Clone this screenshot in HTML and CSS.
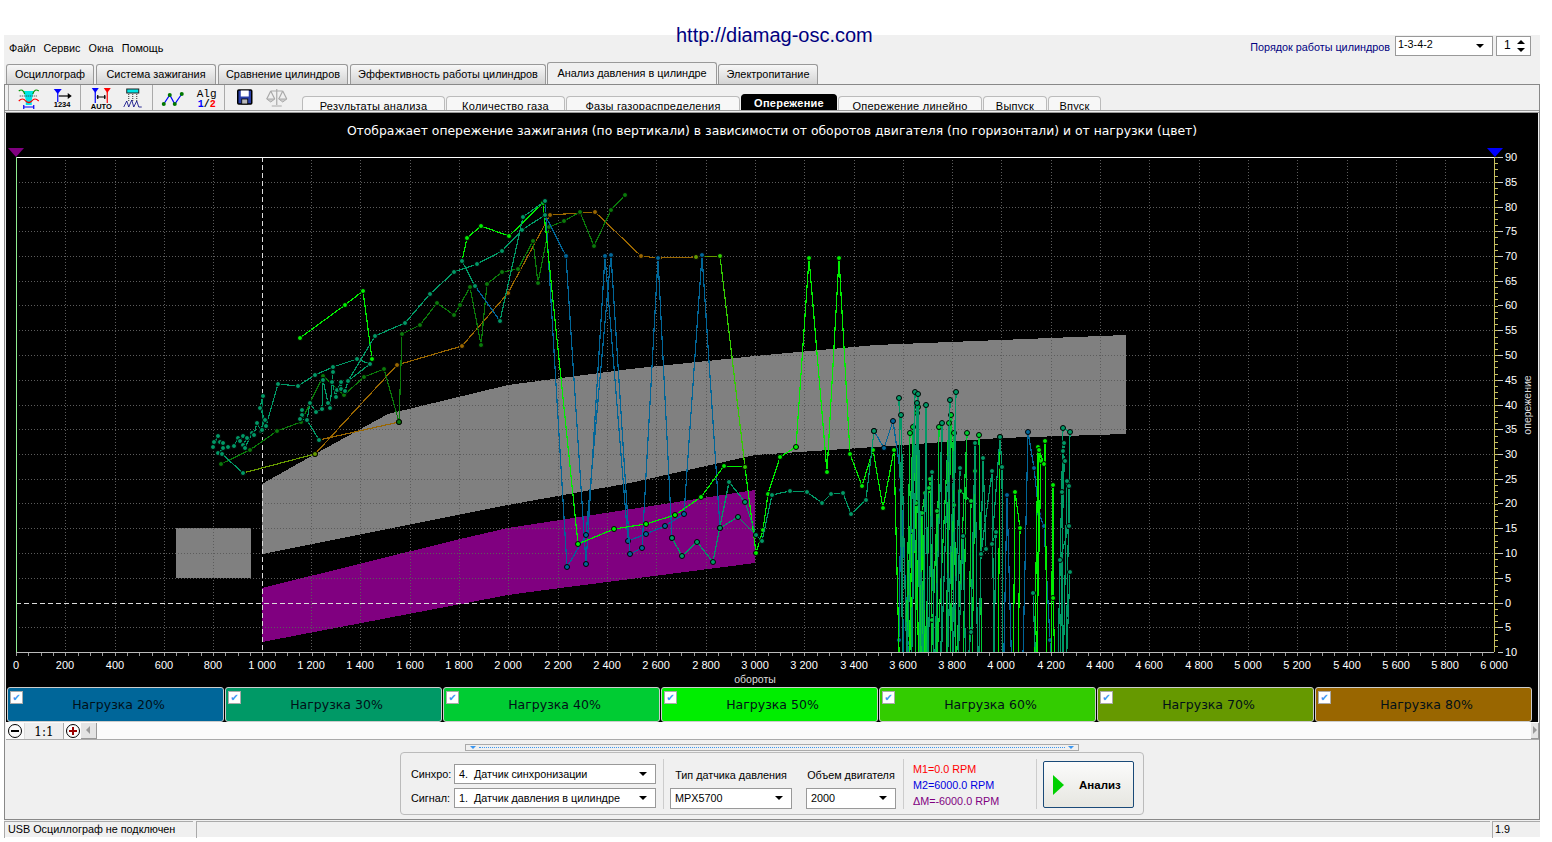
FILE: index.html
```html
<!DOCTYPE html>
<html>
<head>
    <meta charset="utf-8">
    <title>Diamag</title>
    <link rel="stylesheet" href="styles.css">
</head>
<body>
    <div class="site-link">http://diamag-osc.com</div>
    <div class="app">
        <div class="menubar">
            <div class="menu"><span>Файл</span><span>Сервис</span><span>Окна</span><span>Помощь</span></div>
            <div class="firing">
                <span class="firing-label">Порядок работы цилиндров</span>
                <div class="combo combo-firing"><span>1-3-4-2</span><i></i></div>
                <div class="spinner"><span>1</span><b class="up"></b><b class="down"></b></div>
            </div>
        </div>

        <div class="tabs">
            <div class="tab w1">Осциллограф</div>
            <div class="tab w2">Система зажигания</div>
            <div class="tab w3">Сравнение цилиндров</div>
            <div class="tab w4">Эффективность работы цилиндров</div>
            <div class="tab w5 active">Анализ давления в цилиндре</div>
            <div class="tab w6">Электропитание</div>
        </div>

        <div class="workspace">
            <div class="toolbar">
                <div class="tool-group">
                    <svg class="tool" viewBox="0 0 24 24">
                        <polygon class="i-cyan" points="7,5 17,5 15,14 15,19 9,19 9,14"/>
                        <path class="i-green i-thin" d="M2 5Q6 2 8 8M22 5Q18 2 16 8"/>
                        <path class="i-dots" d="M3 10H21"/>
                        <path class="i-red i-thin" d="M2 15Q6 11 9 15Q12 18 15 15Q18 11 22 15"/>
                        <path class="i-blue i-thin" d="M7 21H17M7 19V23M17 19V23"/>
                    </svg>
                    <svg class="tool" viewBox="0 0 24 24">
                        <polygon class="i-bluefill" points="5,3 13,3 9,8"/>
                        <path class="i-blue i-thin" d="M9 7V16"/>
                        <path class="i-black i-thin" d="M10 10H20"/>
                        <polygon class="i-blackfill" points="19,7 23,10 19,13"/>
                        <text class="i-micro" x="5" y="21">1234</text>
                    </svg>
                </div>
                <div class="tool-group">
                    <svg class="tool" viewBox="0 0 24 24">
                        <polygon class="i-bluefill" points="3,2 10,2 6.500,7"/>
                        <path class="i-blue i-thin" d="M6.500 6V17"/>
                        <polygon class="i-redfill" points="15,2 22,2 18.500,7"/>
                        <path class="i-red i-thin" d="M18.500 6V17"/>
                        <path class="i-black i-thin" d="M8 11H17M9 9V13M16 9V13"/>
                        <text class="i-micro" x="2" y="23">AUTO</text>
                    </svg>
                    <svg class="tool" viewBox="0 0 24 24">
                        <rect class="i-cyan i-box" x="6" y="3" width="12" height="4"/>
                        <path class="i-dots" d="M8 8V16M12 8V16M16 8V16"/>
                        <path class="i-navy i-hair" d="M3 21L6 15L8 21L11 14L13 21L16 15L18 21L21 21"/>
                    </svg>
                </div>
                <div class="tool-group">
                    <svg class="tool" viewBox="0 0 24 24">
                        <path class="i-blue i-thin" d="M3 18L9 9L14 18L21 8"/>
                        <circle class="i-dot" cx="3" cy="18" r="2"/>
                        <circle class="i-dot" cx="9" cy="9" r="2"/>
                        <circle class="i-dot" cx="14" cy="18" r="2"/>
                        <circle class="i-dot" cx="21" cy="8" r="2"/>
                    </svg>
                    <svg class="tool" viewBox="0 0 24 24">
                        <text class="i-alg" x="4" y="11">Alg</text>
                        <text class="i-half" x="5" y="21"><tspan class="t-blue">1</tspan>/<tspan class="t-red">2</tspan></text>
                    </svg>
                </div>
                <div class="tool-group">
                    <svg class="tool" viewBox="0 0 24 24">
                        <rect class="i-disk" x="5" y="4" width="14" height="14" rx="1"/>
                        <rect class="i-label" x="8" y="4.500" width="8" height="6"/>
                        <rect class="i-slot" x="9" y="13" width="6" height="5"/>
                    </svg>
                    <svg class="tool" viewBox="0 0 24 24">
                        <path class="i-gray i-thin" d="M12 3V19M6 5H18M6 5L2 13M6 5L10 13M18 5L14 13M18 5L22 13M7 20H17"/>
                        <path class="i-grayfill" d="M2 13H10L6 16ZM14 13H22L18 16Z"/>
                    </svg>
                </div>
                <div class="subtabs">
                    <div class="subtab s1">Результаты анализа</div>
                    <div class="subtab s2">Количество газа</div>
                    <div class="subtab s3">Фазы газораспределения</div>
                    <div class="subtab s4 active">Опережение</div>
                    <div class="subtab s5">Опережение линейно</div>
                    <div class="subtab s6">Выпуск</div>
                    <div class="subtab s7">Впуск</div>
                </div>
            </div>

            <div class="scope">
                <svg class="chart" width="1532" height="574" viewBox="6 113 1532 574">
                    <defs>
                        <clipPath id="plot"><rect x="16" y="157" width="1478" height="495"/></clipPath>
                        <marker id="m20" class="mk m20" markerUnits="userSpaceOnUse" markerWidth="8" markerHeight="8" refX="4" refY="4"><circle cx="4" cy="4" r="2.500"/></marker>
                        <marker id="m30" class="mk m30" markerUnits="userSpaceOnUse" markerWidth="8" markerHeight="8" refX="4" refY="4"><circle cx="4" cy="4" r="2.500"/></marker>
                        <marker id="m40" class="mk m40" markerUnits="userSpaceOnUse" markerWidth="8" markerHeight="8" refX="4" refY="4"><circle cx="4" cy="4" r="2.500"/></marker>
                        <marker id="m50" class="mk m50" markerUnits="userSpaceOnUse" markerWidth="8" markerHeight="8" refX="4" refY="4"><circle cx="4" cy="4" r="2.500"/></marker>
                        <marker id="m55" class="mk m55" markerUnits="userSpaceOnUse" markerWidth="8" markerHeight="8" refX="4" refY="4"><circle cx="4" cy="4" r="2.500"/></marker>
                        <marker id="m60" class="mk m60" markerUnits="userSpaceOnUse" markerWidth="8" markerHeight="8" refX="4" refY="4"><circle cx="4" cy="4" r="2.500"/></marker>
                        <marker id="m70" class="mk m70" markerUnits="userSpaceOnUse" markerWidth="8" markerHeight="8" refX="4" refY="4"><circle cx="4" cy="4" r="2.500"/></marker>
                        <marker id="m80" class="mk m80" markerUnits="userSpaceOnUse" markerWidth="8" markerHeight="8" refX="4" refY="4"><circle cx="4" cy="4" r="2.500"/></marker>
                    </defs>

                    <text class="chart-title" x="772" y="135">Отображает опережение зажигания (по вертикали) в зависимости от оборотов двигателя (по горизонтали) и от нагрузки (цвет)</text>
                    <polygon class="flag-purple" points="8,148 24,148 16,157"/>
                    <polygon class="flag-blue" points="1487,148 1503,148 1495,157"/>

                    <!-- load zones -->
                    <rect class="zone-gray" x="176" y="528" width="75" height="50"/>
                    <polygon class="zone-gray" points="262,484 315,454 388,414 508,385 630,369 755,356 875,345 1000,340 1126,335 1126,434 1000,438 875,447 755,455 630,483 508,505 262,554"/>
                    <polygon class="zone-purple" points="262,588 460,539 508,528 755,490 755,563 545,590 508,595 262,642"/>

                    <!-- grid -->
                    <path class="grid" d="M65 157V652M115 157V652M164 157V652M213 157V652M311 157V652M360 157V652M410 157V652M459 157V652M508 157V652M558 157V652M607 157V652M656 157V652M706 157V652M755 157V652M804 157V652M854 157V652M903 157V652M952 157V652M1001 157V652M1051 157V652M1100 157V652M1149 157V652M1199 157V652M1248 157V652M1297 157V652M1347 157V652M1396 157V652M1445 157V652"/>
                    <path class="grid" d="M16 182H1494M16 207H1494M16 231H1494M16 256H1494M16 281H1494M16 305H1494M16 330H1494M16 355H1494M16 380H1494M16 405H1494M16 429H1494M16 454H1494M16 479H1494M16 503H1494M16 528H1494M16 553H1494M16 578H1494M16 627H1494"/>
                    <path class="cross" d="M262 157V652M16 603H1494"/>

                    <!-- axes -->
                    <path class="axis-top" d="M16 157H1494"/>
                    <path class="axis-left" d="M16 157V652"/>
                    <path class="axis-bottom" d="M16 652H1494"/>
                    <path class="axis-right" d="M1494 157V652"/>
                    <path class="ticks-x" d="M16 654H1494"/>
                    <path class="ticks-y" d="M1496 157V652"/>
                    <path class="ticks-major" d="M1498 157h5M1498 182h5M1498 207h5M1498 231h5M1498 256h5M1498 281h5M1498 305h5M1498 330h5M1498 355h5M1498 380h5M1498 405h5M1498 429h5M1498 454h5M1498 479h5M1498 503h5M1498 528h5M1498 553h5M1498 578h5M1498 603h5M1498 627h5M1498 652h5"/>

                    <g class="labels-y">
                        <text x="1505" y="161">90</text><text x="1505" y="186">85</text><text x="1505" y="211">80</text><text x="1505" y="235">75</text><text x="1505" y="260">70</text><text x="1505" y="285">65</text><text x="1505" y="309">60</text><text x="1505" y="334">55</text><text x="1505" y="359">50</text><text x="1505" y="384">45</text><text x="1505" y="409">40</text><text x="1505" y="433">35</text><text x="1505" y="458">30</text><text x="1505" y="483">25</text><text x="1505" y="507">20</text><text x="1505" y="532">15</text><text x="1505" y="557">10</text><text x="1505" y="582">5</text><text x="1505" y="607">0</text><text x="1505" y="631">5</text><text x="1505" y="656">10</text>
                    </g>
                    <g class="labels-x">
                        <text x="16" y="669">0</text><text x="65" y="669">200</text><text x="115" y="669">400</text><text x="164" y="669">600</text><text x="213" y="669">800</text><text x="262" y="669">1 000</text><text x="311" y="669">1 200</text><text x="360" y="669">1 400</text><text x="410" y="669">1 600</text><text x="459" y="669">1 800</text><text x="508" y="669">2 000</text><text x="558" y="669">2 200</text><text x="607" y="669">2 400</text><text x="656" y="669">2 600</text><text x="706" y="669">2 800</text><text x="755" y="669">3 000</text><text x="804" y="669">3 200</text><text x="854" y="669">3 400</text><text x="903" y="669">3 600</text><text x="952" y="669">3 800</text><text x="1001" y="669">4 000</text><text x="1051" y="669">4 200</text><text x="1100" y="669">4 400</text><text x="1149" y="669">4 600</text><text x="1199" y="669">4 800</text><text x="1248" y="669">5 000</text><text x="1297" y="669">5 200</text><text x="1347" y="669">5 400</text><text x="1396" y="669">5 600</text><text x="1445" y="669">5 800</text><text x="1494" y="669">6 000</text>
                    </g>
                    <text class="axis-name" x="755" y="683">обороты</text>
                    <text class="axis-name" transform="translate(1531 405) rotate(-90)">опережение</text>

                    <!-- measured points, one polyline per run of a load -->
                    <g clip-path="url(#plot)">
                        <g class="run r80" marker-start="url(#m80)" marker-mid="url(#m80)" marker-end="url(#m80)">
                            <polyline points="315,454 397,365 462,346 508,293 550,215 580,213 595,212 641,256 658,258 696,257"/>
                            <polyline points="319,440 399,422"/>
                        </g>
                        <g class="run r70" marker-start="url(#m70)" marker-mid="url(#m70)" marker-end="url(#m70)">
                            <polyline points="243,473 315,454"/>
                            <polyline points="696,257 720,256"/>
                        </g>
                        <g class="run r60" marker-start="url(#m60)" marker-mid="url(#m60)" marker-end="url(#m60)">
                            <polyline points="221,464 250,450 277,431 301,422 310,403 323,376 344,395 364,377 384,369 399,422 402,334 420,325 437,303 454,315 460,305 470,287 481,345 487,284 502,272 518,269 533,241 538,283 549,227 564,221 580,212 594,246 611,210 625,195"/>
                        </g>
                        <g class="run r20" marker-start="url(#m20)" marker-mid="url(#m20)" marker-end="url(#m20)">
                            <polyline points="475,286 500,321"/>
                            <polyline points="545,215 566,256 586,564 605,256 628,541 646,534 665,526 684,514 702,255 720,528"/>
                            <polyline points="545,201 567,567 586,535 611,255 630,554 642,548 658,258 672,538"/>
                            <polyline points="874,431 884,448 893,421 901,477 904,700"/>
                            <polyline points="899,640 901,490 908,643 910,700"/>
                            <polyline points="1003,700 1007,495 1012,680"/>
                            <polyline points="1022,700 1028,432 1034,468 1039,514 1044,526 1050,640 1052,690"/>
                        </g>
                        <g class="run r50" marker-start="url(#m50)" marker-mid="url(#m50)" marker-end="url(#m50)">
                            <polyline points="300,338 345,305 363,291 372,359"/>
                            <polyline points="462,261 467,238 481,226 509,236 543,203 578,544 614,529 646,524 675,515 701,497 724,466 745,467 756,553 763,530 768,494 780,457 796,447 809,258 827,472 839,258 850,454 862,486 873,450 883,508 894,450 900,690"/>
                            <polyline points="912,531 909,672 916,503 919,690 922,513 925,665"/>
                            <polyline points="1013,700 1015,492 1020,528 1018,675"/>
                            <polyline points="1034,690 1038,447 1041,461 1036,680"/>
                            <polyline points="1037,680 1039,450 1044,464 1045,441 1047,672"/>
                            <polyline points="1051,680 1053,485 1053,598 1056,700"/>
                            <polyline points="981,554 986,549"/>
                            <polyline points="998,690 1000,437 1002,467"/>
                        </g>
                        <g class="run r40" marker-start="url(#m40)" marker-mid="url(#m40)" marker-end="url(#m40)">
                            <polyline points="910,433 906,665 913,427 916,503 917,413 915,700 918,407 921,680 925,493 922,513 926,668 929,488 930,479 932,620 931,670 937,511 936,680 939,427 937,660 949,423 946,690 951,415 954,505 950,668 954,433 956,670 967,433 963,680"/>
                            <polyline points="960,491 971,501 969,660"/>
                            <polyline points="975,471 972,672"/>
                            <polyline points="979,435 982,690"/>
                        </g>
                        <g class="run r30" marker-start="url(#m30)" marker-mid="url(#m30)" marker-end="url(#m30)">
                            <polyline points="213,447 218,436 214,442 220,442 223,443 223,448 218,453 228,447 234,446 238,438 240,441 243,436 247,438 243,445 245,448 252,433 254,435 257,423 261,431 265,420 260,408 263,396 262,430 266,426 278,384 298,386 315,375 333,367 357,359 370,364 348,381 375,336 405,323 430,294 454,272 477,264 502,251 522,230 545,215"/>
                            <polyline points="222,454 243,473"/>
                            <polyline points="302,410 302,415 300,419 307,420 310,403 316,412 322,409 323,380 328,403 330,408 333,372 332,382 336,397 337,390 341,382 341,389 345,391 348,381"/>
                            <polyline points="307,420 319,440"/>
                            <polyline points="462,261 475,286"/>
                            <polyline points="500,321 523,217 545,201"/>
                            <polyline points="672,538 682,556 697,542 713,562 729,482 745,502 756,535 762,541 772,495 790,491 807,492 822,503 831,494 843,493 851,514 866,500 874,431"/>
                            <polyline points="720,528 738,517 756,535"/>
                            <polyline points="899,398 903,680 901,415 907,668 915,392 911,690 917,403 920,664 918,394 923,700 926,405 928,672 932,472 934,685 942,423 941,670 950,400 947,676 956,392 952,690 960,468 958,665 963,536 966,680 971,632 975,443 978,700 983,458 986,549 981,554 992,471 994,662 996,532 992,544 1000,437 1002,467 1003,670"/>
                            <polyline points="1033,593 1036,670"/>
                            <polyline points="1060,680 1064,443 1063,451 1065,461 1062,492 1063,680 1067,481 1069,486 1069,526 1060,560 1058,668 1063,428 1070,432 1066,672 1070,572"/>
                        </g>
                        <g class="run r55" marker-start="url(#m55)" marker-mid="url(#m55)" marker-end="url(#m55)">
                            <polyline points="720,256 745,467"/>
                        </g>
                    </g>
                </svg>

                <div class="legend">
                    <div class="load l20"><span class="check">✔</span>Нагрузка 20%</div>
                    <div class="load l30"><span class="check">✔</span>Нагрузка 30%</div>
                    <div class="load l40"><span class="check">✔</span>Нагрузка 40%</div>
                    <div class="load l50"><span class="check">✔</span>Нагрузка 50%</div>
                    <div class="load l60"><span class="check">✔</span>Нагрузка 60%</div>
                    <div class="load l70"><span class="check">✔</span>Нагрузка 70%</div>
                    <div class="load l80"><span class="check">✔</span>Нагрузка 80%</div>
                </div>
            </div>

            <div class="zoombar">
                <div class="zoom-btn minus"></div>
                <div class="zoom-level">1:1</div>
                <div class="zoom-btn plus"></div>
                <div class="scroll-btn left"></div>
                <div class="scroll-track"></div>
                <div class="scroll-btn right"></div>
            </div>

            <div class="bottom">
                <div class="splitter"><i></i><span></span><i></i></div>
                <div class="groupbox">
                    <div class="signals">
                        <label>Синхро:</label>
                        <div class="combo"><span>4.&nbsp; Датчик синхронизации</span><i></i></div>
                        <label>Сигнал:</label>
                        <div class="combo"><span>1.&nbsp; Датчик давления в цилиндре</span><i></i></div>
                    </div>
                    <div class="sep"></div>
                    <div class="field field-sensor">
                        <label>Тип датчика давления</label>
                        <div class="combo"><span>MPX5700</span><i></i></div>
                    </div>
                    <div class="field field-volume">
                        <label>Объем двигателя</label>
                        <div class="combo"><span>2000</span><i></i></div>
                    </div>
                    <div class="sep"></div>
                    <div class="marks">
                        <div class="mark-red">M1=0.0 RPM</div>
                        <div class="mark-blue">M2=6000.0 RPM</div>
                        <div class="mark-purple">ΔM=-6000.0 RPM</div>
                    </div>
                    <div class="sep"></div>
                    <button class="run-btn"><i></i>Анализ</button>
                </div>
            </div>
        </div>

        <div class="statusbar">
            <div class="status st-left">USB Осциллограф не подключен</div>
            <div class="status st-mid"></div>
            <div class="status st-right">1.9</div>
        </div>
    </div>
</body>
</html>
```

FILE: styles.css
```css
body {
    margin: 0;
    background: #fff;
    font-family: "Liberation Sans", Arial, sans-serif;
    font-size: 10.800px;
    color: #000;
    position: relative;
    height: 842px;
    overflow: hidden;
}

.site-link {
    position: absolute;
    left: 676px;
    top: 24px;
    font-size: 20px;
    color: #000080;
    z-index: 2;
}

.app {
    margin: 35px 12px 0 4px;
    background: #f0f0f0;
    height: 802px;
}

/* top row */
.menubar {
    height: 29px;
    display: flex;
    justify-content: space-between;
}

.menu {
    display: flex;
    gap: 8px;
    padding: 7px 0 0 5px;
}

.firing {
    display: flex;
    gap: 5px;
    padding: 1px 9px 0 0;
}

.firing-label {
    color: #000080;
    padding-top: 5px;
}

.combo {
    height: 20px;
    box-sizing: border-box;
    border: 1px solid #999;
    background: #fff;
    display: flex;
    align-items: center;
    justify-content: space-between;
    padding: 0 8px 0 4px;
    white-space: nowrap;
}

.combo i {
    border-left: 4px solid transparent;
    border-right: 4px solid transparent;
    border-top: 4px solid #000;
}

.combo-firing {
    width: 98px;
    padding-left: 2px;
}

.combo-firing span {
    margin-top: -4px;
}

.spinner {
    width: 35px;
    height: 20px;
    box-sizing: border-box;
    border: 1px solid #999;
    background: #fff;
    margin-left: -2px;
    padding: 0 0 0 7px;
    line-height: 17px;
    font-size: 12px;
    position: relative;
}

.spinner b {
    position: absolute;
    right: 5px;
    border-left: 4px solid transparent;
    border-right: 4px solid transparent;
}

.spinner .up {
    top: 3px;
    border-bottom: 4px solid #000;
}

.spinner .down {
    bottom: 3px;
    border-top: 4px solid #000;
}

/* main tabs */
.tabs {
    height: 20px;
    display: flex;
    align-items: flex-end;
    padding-left: 2px;
    gap: 2px;
}

.tab {
    height: 20px;
    box-sizing: border-box;
    border: 1px solid #999;
    border-bottom: none;
    border-radius: 3px 3px 0 0;
    background: linear-gradient(#f7f7f7, #d4d4d4);
    text-align: center;
    font-size: 10.900px;
    line-height: 19px;
}

.tab.active {
    height: 22px;
    background: #f0f0f0;
    margin: 0 -1px 0 -1px;
    line-height: 20px;
    padding-bottom: 2px;
    position: relative;
}

.w1 { width: 88px; }
.w2 { width: 120px; }
.w3 { width: 130px; }
.w4 { width: 196px; }
.w5 { width: 170px; }
.w6 { width: 100px; }

/* workspace */
.workspace {
    height: 736px;
    box-sizing: border-box;
    border: 1px solid #888;
    background: #f0f0f0;
}

.toolbar {
    height: 28px;
    box-sizing: border-box;
    border-bottom: 3px double #999;
    display: flex;
    overflow: hidden;
    padding-left: 3px;
}

.tool-group {
    width: 72px;
    height: 25px;
    padding: 0 4px;
    box-sizing: border-box;
    border-left: 1px solid #aaa;
    display: flex;
    align-items: center;
}

.tool {
    width: 32px;
    height: 24px;
}

.subtabs {
    display: flex;
    margin-left: 6px;
    height: 25px;
    align-items: flex-end;
    gap: 1px;
}

.subtab {
    height: 14px;
    box-sizing: border-box;
    border: 1px solid #bbb;
    border-bottom: none;
    border-radius: 4px 4px 0 0;
    background: #f7f7f7;
    text-align: center;
    line-height: 18px;
    font-size: 11px;
    letter-spacing: 0.250px;
    overflow: hidden;
}

.subtab.active {
    height: 16px;
    background: #000;
    border-color: #000;
    color: #fff;
    font-weight: bold;
    line-height: 16px;
}

.s1 { width: 143px; }
.s2 { width: 119px; }
.s3 { width: 174px; }
.s4 { width: 96px; }
.s5 { width: 144px; }
.s6 { width: 64px; }
.s7 { width: 53px; }

/* icons */
.i-thin { fill: none; stroke-width: 1.200; }
.i-hair { fill: none; stroke-width: 0.800; }
.i-cyan { fill: #00e5e5; }
.i-box { stroke: #222; stroke-width: 1; }
.i-green { stroke: #009900; }
.i-red { stroke: #f00; }
.i-blue { stroke: #00f; }
.i-navy { stroke: #000080; }
.i-black { stroke: #000; }
.i-gray { stroke: #aaa; }
.i-grayfill { fill: #ccc; stroke: #aaa; }
.i-dots { fill: none; stroke: #333; stroke-dasharray: 1 1; }
.i-bluefill { fill: #00f; }
.i-redfill { fill: #f00; }
.i-blackfill { fill: #000; }
.i-dot { fill: #007700; }
.i-disk { fill: #2a3fa8; stroke: #000; stroke-width: 1.500; }
.i-label { fill: #fff; }
.i-slot { fill: #bbb; stroke: #000; stroke-width: 0.800; }
.i-micro { font-size: 7.500px; font-weight: bold; }
.i-alg { font-family: "Liberation Mono", monospace; font-size: 11px; }
.i-half { font-family: "Liberation Mono", monospace; font-size: 10px; font-weight: bold; }
.t-blue { fill: #00f; }
.t-red { fill: #f00; }

/* chart */
.scope {
    margin: 0 1px;
    height: 609px;
    background: #000;
}

.chart {
    display: block;
}

.chart-title {
    fill: #fff;
    font-family: "DejaVu Sans", sans-serif;
    font-size: 12.360px;
    text-anchor: middle;
}

.flag-purple { fill: #800080; }
.flag-blue { fill: #00f; }
.zone-gray { fill: #808080; shape-rendering: crispEdges; }
.zone-purple { fill: #800080; shape-rendering: crispEdges; }

.grid {
    fill: none;
    stroke: #5c5c5c;
    stroke-dasharray: 1 2;
    shape-rendering: crispEdges;
}

.cross {
    fill: none;
    stroke: #ddd;
    stroke-dasharray: 5 3;
    shape-rendering: crispEdges;
}

.axis-top, .axis-left, .axis-bottom, .axis-right, .ticks-x, .ticks-y, .ticks-major {
    fill: none;
    shape-rendering: crispEdges;
}

.axis-top { stroke: #fff; }
.axis-left { stroke: #90ee90; }
.axis-bottom { stroke: #bbb; }
.axis-right { stroke: #c8c060; }
.ticks-x { stroke: #999; stroke-width: 3; stroke-dasharray: 1 11.320; }
.ticks-y { stroke: #c8c060; stroke-width: 4; stroke-dasharray: 1 5.190; }
.ticks-major { stroke: #ccc; }

.labels-x text, .labels-y text {
    fill: #fff;
    font-size: 11px;
}

.labels-x text {
    text-anchor: middle;
}

.axis-name {
    fill: #ddd;
    font-size: 10.500px;
    text-anchor: middle;
}

.run polyline {
    fill: none;
    stroke-width: 1.200;
    shape-rendering: crispEdges;
}

.mk circle {
    stroke: #000;
    stroke-width: 1;
}

.r20 polyline { stroke: #006699; }
.r30 polyline { stroke: #009966; }
.r40 polyline { stroke: #00cc33; }
.r50 polyline { stroke: #00ee00; }
.r55 polyline { stroke: #33cc00; }
.r60 polyline { stroke: #0a7a0a; }
.r70 polyline { stroke: #669900; }
.r80 polyline { stroke: #996600; }

.m20 circle { fill: #006699; }
.m30 circle { fill: #009966; }
.m40 circle { fill: #00cc33; }
.m50 circle { fill: #00ee00; }
.m55 circle { fill: #33cc00; }
.m60 circle { fill: #0a7a0a; }
.m70 circle { fill: #669900; }
.m80 circle { fill: #996600; }

/* legend */
.legend {
    display: grid;
    grid-template-columns: repeat(7, 1fr);
    gap: 1px;
    height: 35px;
    margin: 0 6px 0 1px;
}

.load {
    box-sizing: border-box;
    border: 1px solid #ccc;
    border-radius: 3px;
    font-family: "DejaVu Sans", sans-serif;
    font-size: 12.500px;
    line-height: 33px;
    padding-left: 6px;
    text-align: center;
    color: #001018;
    position: relative;
}

.check {
    position: absolute;
    left: 2px;
    top: 3px;
    width: 13px;
    height: 13px;
    box-sizing: border-box;
    border: 1px solid #aaa;
    background: #fff;
    color: #3a96f0;
    font-size: 10px;
    line-height: 11px;
}

.l20 { background: #006699; }
.l30 { background: #009966; }
.l40 { background: #00cc33; }
.l50 { background: #00ee00; }
.l60 { background: #33cc00; }
.l70 { background: #669900; }
.l80 { background: #996600; }

/* zoom row */
.zoombar {
    height: 17px;
    margin: 0 0 0 1px;
    border-bottom: 1px solid #aaa;
    box-sizing: content-box;
    background: #fbfbfb;
    display: flex;
    align-items: center;
}

.zoom-btn {
    width: 12px;
    height: 12px;
    margin: 0 2px;
    border: 1px solid #000;
    border-radius: 50%;
    position: relative;
}

.zoom-btn::before {
    content: "";
    position: absolute;
    left: 2px;
    right: 2px;
    top: 5px;
    height: 2px;
    background: #000;
}

.plus::before, .plus::after {
    background: #900;
}

.plus::after {
    content: "";
    position: absolute;
    top: 2px;
    bottom: 2px;
    left: 5px;
    width: 2px;
}

.zoom-level {
    width: 38px;
    height: 16px;
    background: #eee;
    border-right: 1px solid #aaa;
    border-left: 1px solid #ddd;
    text-align: center;
    font-family: "DejaVu Serif", serif;
    font-size: 12px;
    line-height: 18px;
}

.scroll-btn {
    width: 16px;
    height: 16px;
    box-sizing: border-box;
    background: #e4e4e4;
    border-right: 1px solid #999;
    border-bottom: 1px solid #999;
    position: relative;
}

.scroll-btn::before {
    content: "";
    position: absolute;
    top: 3px;
    border-top: 4px solid transparent;
    border-bottom: 4px solid transparent;
}

.scroll-btn.left { margin-left: -1px; }
.scroll-btn.left::before { left: 5px; border-right: 4px solid #999; }
.scroll-btn.right { width: 8px; }
.scroll-btn.right::before { left: 2px; border-left: 4px solid #999; }

.scroll-track {
    flex: 1;
}

/* bottom panel */
.bottom {
    height: 78px;
}

.splitter {
    width: 604px;
    height: 5px;
    border: 1px solid #aaa;
    margin: 4px 0 0 460px;
    display: flex;
    align-items: center;
    gap: 3px;
    padding: 0 4px;
    box-sizing: content-box;
}

.splitter i {
    border-left: 3px solid transparent;
    border-right: 3px solid transparent;
    border-top: 3px solid #3a96f0;
}

.splitter span {
    flex: 1;
    border-top: 1px dotted #3a96f0;
}

.groupbox {
    width: 744px;
    height: 63px;
    box-sizing: border-box;
    margin: 1px 0 0 395px;
    border: 1px solid #bbb;
    border-radius: 4px;
    display: flex;
    align-items: center;
    padding-left: 10px;
}

.sep {
    width: 1px;
    height: 50px;
    background: #ccc;
    margin: 0 6px 0 7px;
    flex: none;
}

.signals {
    display: grid;
    grid-template-columns: 40px 202px;
    column-gap: 3px;
    row-gap: 4px;
    align-items: center;
    margin-top: 4px;
}

.field {
    display: flex;
    flex-direction: column;
    gap: 7px;
    text-align: center;
    white-space: nowrap;
    margin-top: 9px;
    padding-top: 1px;
}

.field-sensor {
    width: 122px;
}

.field-volume {
    width: 90px;
    margin-left: 14px;
}

.field .combo {
    height: 21px;
    text-align: left;
}

.marks {
    width: 126px;
    height: 50px;
    box-sizing: border-box;
    padding: 2px 0 0 3px;
    line-height: 16px;
    white-space: nowrap;
}

.marks + .sep {
    margin-left: 0;
}

.mark-red { color: #f00; }
.mark-blue { color: #0000e0; }
.mark-purple { color: #800080; }

.run-btn {
    width: 91px;
    height: 47px;
    border: 1px solid #1a4a78;
    border-radius: 2px;
    background: linear-gradient(#fbfbfb, #e6e6e0);
    font-family: "Liberation Sans", sans-serif;
    font-size: 11.500px;
    font-weight: bold;
    display: flex;
    align-items: center;
    padding: 0 0 0 9px;
    margin-top: 2px;
}

.run-btn i {
    border-left: 11px solid #00d000;
    border-top: 10px solid transparent;
    border-bottom: 10px solid transparent;
    margin-right: 15px;
}

/* status */
.statusbar {
    display: flex;
    gap: 3px;
    margin-top: 1px;
    height: 17px;
}

.status {
    box-sizing: border-box;
    height: 17px;
    border-top: 1px solid #aaa;
    border-left: 1px solid #aaa;
    padding: 1px 3px;
    white-space: nowrap;
}

.st-left { width: 189px; }
.st-mid { flex: 1; }
.st-right { width: 48px; margin-left: -1px; padding-left: 2px; }
```
